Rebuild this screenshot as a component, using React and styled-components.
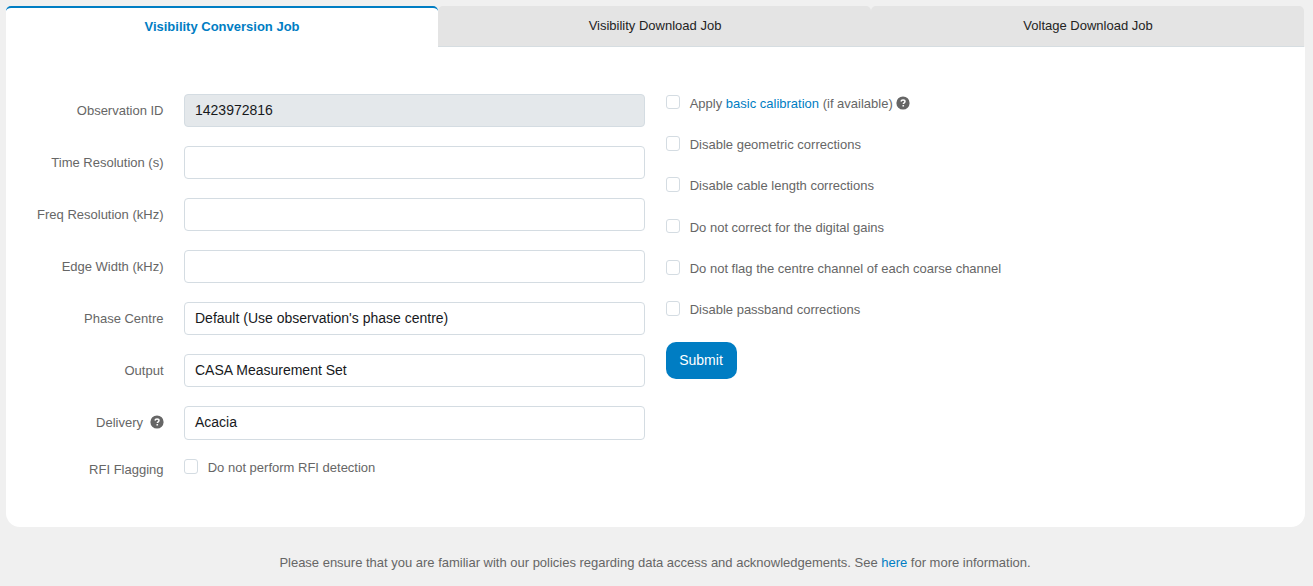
import React from "react";
import styled, { createGlobalStyle } from "styled-components";

const GlobalStyle = createGlobalStyle`
  *, *::before, *::after { box-sizing: border-box; }
  body {
    margin: 0;
    background: #f0f0f0;
    color: #666;
    font: 13px/20px "Liberation Sans", Arial, sans-serif;
    overflow: hidden;
  }
`;

const Page = styled.main`
  padding: 6px 8px 0 6px;
`;

const Tabs = styled.nav`
  display: grid;
  grid-template-columns: 432px 433px 433px;
  height: 41px;
`;

const Tab = styled.button`
  border: 0;
  border-top: ${(p) => (p.$active ? "2px solid #007dc3" : "0")};
  border-bottom: ${(p) => (p.$active ? "0" : "1px solid #d6dde1")};
  border-radius: 5px 5px 0 0;
  background: ${(p) => (p.$active ? "#fff" : "#e4e4e4")};
  color: ${(p) => (p.$active ? "#007dc3" : "#232323")};
  font: inherit;
  font-weight: ${(p) => (p.$active ? 700 : 400)};
  padding: 0 0 1px ${(p) => (p.$active ? "0" : "1px")};
`;

const Panel = styled.form`
  display: flex;
  width: 1299px;
  gap: 21px;
  height: 480px;
  padding: 47px 0 0 20px;
  background: #fff;
  border-radius: 0 0 14px 14px;
`;

const Fields = styled.div`
  display: flex;
  flex-direction: column;
  gap: 19px;
  width: 619px;
`;

const Row = styled.div`
  display: grid;
  grid-template-columns: 137.5px 461px;
  column-gap: 20.5px;
`;

const Label = styled.label`
  display: flex;
  justify-content: flex-end;
  align-items: center;
  gap: 7px;
  padding-top: ${(p) => (p.$low ? "1px" : "0")};
`;

const Field = styled.div`
  height: ${(p) => (p.$tall ? "34px" : "33px")};
  padding: 0 10px;
  border: 1px solid #d4dce2;
  border-radius: 4px;
  background: ${(p) => (p.$disabled ? "#e4e8eb" : "#fff")};
  color: #17191c;
  font-size: 14px;
  line-height: 31px;
`;

const Options = styled.div`
  display: flex;
  flex-direction: column;
  align-items: flex-start;
  margin-top: -0.25px;
`;

const Option = styled.label`
  display: flex;
  align-items: flex-start;
  gap: 9.7px;
  height: ${(p) => (p.$single ? "20px" : "41.25px")};
  margin-top: ${(p) => (p.$single ? "-1px" : "0")};
`;

const Box = styled.span`
  width: 14px;
  height: ${(p) => (p.$short ? "14px" : "15px")};
  margin-top: 1px;
  border: 1px solid #d4dce2;
  border-radius: 3px;
  background: #fff;
`;

const Link = styled.a`
  color: #007dc3;
`;

const HelpIcon = styled.svg`
  width: 14px;
  height: 14px;
  flex: none;
  vertical-align: -2px;
  margin: ${(p) => (p.$inline ? "0 0 0 -0.5px" : "0 -0.5px 2px 0")};
`;

const Submit = styled.button`
  width: 71px;
  height: 37px;
  margin-top: 0.75px;
  border: 0;
  border-radius: 10px;
  background: #007dc3;
  color: #fff;
  font: 14px/20px "Liberation Sans", Arial, sans-serif;
  padding: 0 1px 2px 0;
`;

const Footer = styled.footer`
  padding: 26px 1px 0 0;
  text-align: center;
  letter-spacing: -0.008px;
`;

function Help({ inline }) {
  return (
    <HelpIcon viewBox="0 0 14 14" $inline={inline}>
      <circle cx="7" cy="7" r="6.6" fill="#666" />
      <path
        d="M5 5.5C5.2 4.5 6 4.1 7 4.1c1.2 0 2 .6 2 1.5 0 1.2-1.7 1.3-1.7 2.5"
        fill="none"
        stroke="#fff"
        strokeWidth="1.5"
      />
      <rect x="6.4" y="8.9" width="1.7" height="1.6" rx=".5" fill="#fff" />
    </HelpIcon>
  );
}

const fields = [
  { label: "Observation ID", value: "1423972816", disabled: true },
  { label: "Time Resolution (s)" },
  { label: "Freq Resolution (kHz)" },
  { label: "Edge Width (kHz)" },
  { label: "Phase Centre", value: "Default (Use observation's phase centre)" },
  { label: "Output", value: "CASA Measurement Set" },
  { label: "Delivery", value: "Acacia", help: true, tall: true },
];

const options = [
  { text: "Disable geometric corrections" },
  { text: "Disable cable length corrections" },
  { text: "Do not correct for the digital gains", short: true },
  { text: "Do not flag the centre channel of each coarse channel" },
  { text: "Disable passband corrections" },
];

export default function App() {
  return (
    <>
      <GlobalStyle />
      <Page>
        <Tabs>
          <Tab $active>Visibility Conversion Job</Tab>
          <Tab>Visibility Download Job</Tab>
          <Tab>Voltage Download Job</Tab>
        </Tabs>
        <Panel>
          <Fields>
            {fields.map((f) => (
              <Row key={f.label}>
                <Label>
                  {f.label}
                  {f.help && <Help />}
                </Label>
                <Field $disabled={f.disabled} $tall={f.tall}>
                  {f.value}
                </Field>
              </Row>
            ))}
            <Row>
              <Label $low>RFI Flagging</Label>
              <Option $single>
                <Box />
                <span>Do not perform RFI detection</span>
              </Option>
            </Row>
          </Fields>
          <Options>
            <Option>
              <Box $short />
              <span>
                Apply <Link>basic calibration</Link> (if available) <Help inline />
              </span>
            </Option>
            {options.map((o) => (
              <Option key={o.text}>
                <Box $short={o.short} />
                <span>{o.text}</span>
              </Option>
            ))}
            <Submit type="button">Submit</Submit>
          </Options>
        </Panel>
        <Footer>
          Please ensure that you are familiar with our policies regarding data access and
          acknowledgements. See <Link>here</Link> for more information.
        </Footer>
      </Page>
    </>
  );
}
